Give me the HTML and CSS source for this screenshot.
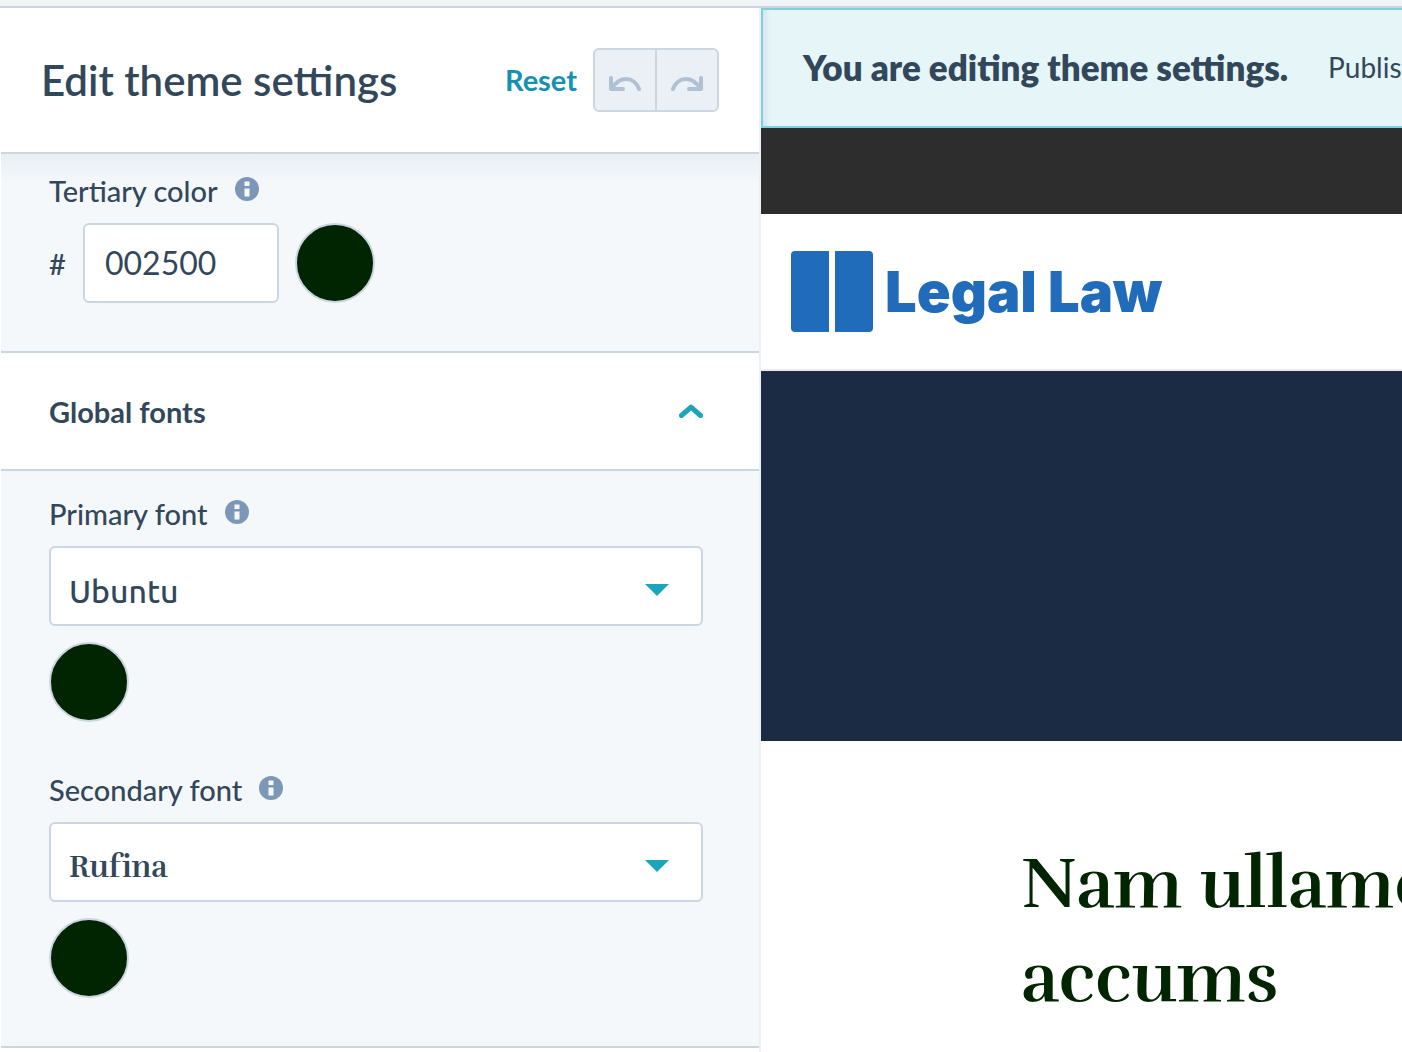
FILE: index.html
```
<!DOCTYPE html>
<html lang="en">
<head>
    <meta charset="UTF-8">
    <meta name="viewport" content="width=device-width, initial-scale=1.0">
    <title>Edit theme settings</title>
    <link rel="stylesheet" href="styles.css">
</head>
<body>

<svg class="defs" width="0" height="0" aria-hidden="true">
    <symbol id="info" viewBox="0 0 24 24">
        <circle cx="12" cy="12" r="12" fill="#7c98b6"/>
        <path d="M9.500 4.500h5v4.500h-5zM9.500 11.500h5v8h-5z" fill="#f5f8fa"/>
    </symbol>
    <symbol id="caret" viewBox="0 0 24 12">
        <path d="M0 0h24L12 12z" fill="#1aa5bb"/>
    </symbol>
</svg>

<div class="topbar"></div>

<div class="editor">
    <aside class="sidebar">
        <header class="sidebar-header">
            <h1>Edit theme settings</h1>
            <div class="tools">
                <button type="button" class="reset">Reset</button>
                <div class="history">
                    <button type="button" aria-label="Undo" disabled>
                        <svg width="32" height="32" viewBox="0 0 32 32"><path d="M2 14v11h12M3 24C7 18 12 15 17 15C23 15 28 19 30 25"/></svg>
                    </button>
                    <button type="button" aria-label="Redo" disabled>
                        <svg width="32" height="32" viewBox="0 0 32 32"><path d="M30 14v11H18M29 24C25 18 20 15 15 15C9 15 4 19 2 25"/></svg>
                    </button>
                </div>
            </div>
        </header>

        <section class="panel panel-colors">
            <div class="field">
                <div class="label">
                    <label for="tertiary">Tertiary color</label>
                    <svg class="info"><use href="#info"/></svg>
                </div>
                <div class="color-row">
                    <span class="hash">#</span>
                    <input type="text" class="hex" id="tertiary" value="002500">
                    <button type="button" class="swatch" aria-label="Pick tertiary color"></button>
                </div>
            </div>
        </section>

        <button type="button" class="section-toggle" aria-expanded="true">
            <span>Global fonts</span>
            <svg width="24" height="14" viewBox="0 0 24 14"><path d="M2.500 11.500L12 3.200L21.500 11.500"/></svg>
        </button>

        <section class="panel panel-fonts">
            <div class="field">
                <div class="label">
                    <label for="primary">Primary font</label>
                    <svg class="info"><use href="#info"/></svg>
                </div>
                <div class="select">
                    <select id="primary" class="font-ubuntu">
                        <option>Ubuntu</option>
                    </select>
                    <svg class="caret"><use href="#caret"/></svg>
                </div>
                <button type="button" class="swatch" aria-label="Pick primary font color"></button>
            </div>
            <div class="field">
                <div class="label">
                    <label for="secondary">Secondary font</label>
                    <svg class="info"><use href="#info"/></svg>
                </div>
                <div class="select">
                    <select id="secondary" class="font-rufina">
                        <option>Rufina</option>
                    </select>
                    <svg class="caret"><use href="#caret"/></svg>
                </div>
                <button type="button" class="swatch" aria-label="Pick secondary font color"></button>
            </div>
        </section>
    </aside>

    <main class="preview">
        <div class="banner">
            <strong>You are editing theme settings.</strong>
            <span>Publis</span>
        </div>
        <div class="site-top"></div>
        <div class="site-header">
            <svg width="82" height="81" viewBox="0 0 82 81"><path d="M4 0H38V81H4A4 4 0 0 1 0 77V4A4 4 0 0 1 4 0zM44 0H78A4 4 0 0 1 82 4V77A4 4 0 0 1 78 81H44z" fill="#216cba"/></svg>
            <span class="site-name">Legal Law</span>
        </div>
        <div class="hero"></div>
        <h2 class="site-heading">Nam ullamc<br>accums</h2>
    </main>
</div>

</body>
</html>
```
FILE: styles.css
```
* {box-sizing: border-box;}
body {
    margin: 0;
    min-height: 100vh;
    display: flex;
    flex-direction: column;
    overflow: hidden;
    background: #fff;
    color: #33475b;
    font-family: Lato, "Open Sans", sans-serif;
    font-size: 29px;
}
h1, h2 {margin: 0;}
button, input, select {font: inherit; color: inherit; margin: 0;}
button {padding: 0; border: 0; background: none; cursor: pointer;}
svg {display: block; flex: none;}
.defs {position: absolute;}

.topbar {height: 8px; background: #f1f5f8; border-bottom: 2px solid #cbd6e2;}
.editor {
    flex: 1;
    display: grid;
    grid-template-columns: minmax(0, 761fr) minmax(0, 641fr);
}

/* sidebar */
.sidebar {padding-left: 1px; border-right: 2px solid #eaf0f6;}
.sidebar-header {
    display: flex;
    align-items: center;
    justify-content: space-between;
    padding: 40px;
    border-bottom: 2px solid #cbd6e2;
}
.sidebar-header h1 {font-size: 42px; line-height: 64px; font-weight: 600;}
.tools {display: flex; align-items: center; gap: 16px;}
.reset {padding-bottom: 2px; color: #1491b0; font-weight: 700;}
.history {
    display: flex;
    border: 2px solid #cbd6e2;
    border-radius: 6px;
    background: #eaf0f6;
}
.history button {padding: 14px; cursor: default;}
.history button + button {border-left: 2px solid #cbd6e2;}
.history path {
    fill: none;
    stroke: #b0c1d4;
    stroke-width: 4;
    stroke-linecap: round;
    stroke-linejoin: round;
}

.panel {
    display: flex;
    flex-direction: column;
    gap: 48px;
    padding: 23px 56px 48px 48px;
    background: #f5f8fa;
    border-bottom: 2px solid #cbd6e2;
}
.panel-colors {
    padding-top: 17px;
    background: linear-gradient(#e9eff4, #f5f8fa 30px);
}
.label {
    display: flex;
    align-items: center;
    gap: 17px;
    height: 38px;
    margin-bottom: 14px;
    font-weight: 500;
}
.info {width: 24px; height: 24px; margin-bottom: 2px;}
.color-row {display: flex; align-items: center; gap: 16px;}
.hash {width: 18px; font-weight: 500;}
.hex {
    width: 196px;
    height: 80px;
    padding: 0 20px 2px;
    border: 2px solid #cbd6e2;
    border-radius: 6px;
    background: #fff;
    font-size: 32px;
}
.swatch {
    display: block;
    width: 80px;
    height: 80px;
    border: 2px solid #cbd6e2;
    border-radius: 50%;
    background: #002500;
}
.section-toggle {
    display: flex;
    align-items: center;
    justify-content: space-between;
    width: 100%;
    height: 118px;
    padding: 0 56px 0 48px;
    border-bottom: 2px solid #cbd6e2;
    font-weight: 700;
}
.section-toggle path {
    fill: none;
    stroke: #1aa5bb;
    stroke-width: 5;
    stroke-linecap: round;
    stroke-linejoin: round;
}
.select {position: relative; margin-bottom: 16px;}
.select select {
    display: block;
    appearance: none;
    width: 100%;
    height: 80px;
    padding: 10px 64px 0 18px;
    border: 2px solid #cbd6e2;
    border-radius: 6px;
    background: #fff;
}
.select .font-ubuntu {font-family: Ubuntu, Roboto, sans-serif; font-size: 32px; font-weight: 500;}
.select .font-rufina {font-family: Rufina, "Liberation Serif", serif; font-size: 31px; font-weight: 700;}
.caret {
    position: absolute;
    top: 38px;
    right: 34px;
    width: 24px;
    height: 12px;
    pointer-events: none;
}

/* page preview */
.preview {overflow: hidden;}
.banner {
    display: flex;
    align-items: center;
    gap: 40px;
    height: 120px;
    padding: 0 0 2px 40px;
    border: 2px solid #7fd1de;
    border-right: 0;
    background: linear-gradient(to right, #d8e7ee, #e5f5f8 8px);
    font-size: 28px;
    white-space: nowrap;
}
.banner strong {font-size: 35px; font-weight: 800;}
.site-top {height: 86px; background: #2d2d2d;}
.site-header {
    display: flex;
    align-items: center;
    gap: 12px;
    height: 157px;
    padding: 0 30px;
    border-bottom: 2px solid #ebebeb;
    color: #216cba;
}
.site-name {font-family: Inter, sans-serif; font-size: 56px; font-weight: 900; white-space: nowrap;}
.hero {height: 370px; background: #1c2b44;}
.site-heading {
    padding: 96px 0 0 260px;
    color: #002500;
    font-family: Rufina, "Liberation Serif", serif;
    font-size: 72px;
    line-height: 94px;
    font-weight: 700;
    white-space: nowrap;
}
```
